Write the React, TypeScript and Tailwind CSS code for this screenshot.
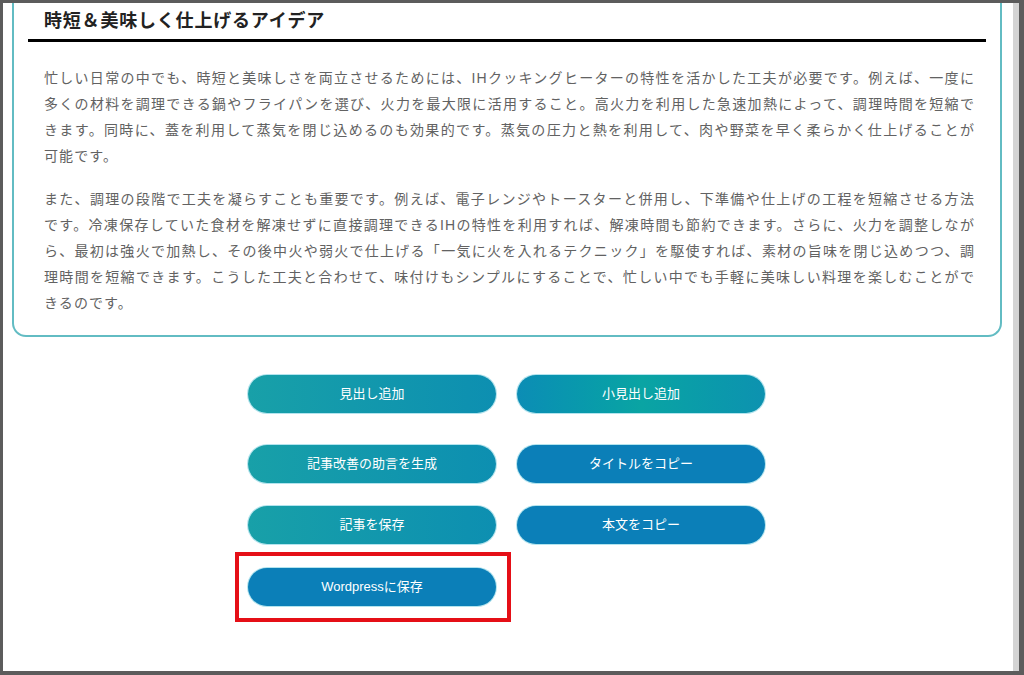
const font = { fontFamily: '"Liberation Sans", "Noto Sans CJK JP", sans-serif' };

const para1 = [
  '忙しい日常の中でも、時短と美味しさを両立させるためには、IHクッキングヒーターの特性を活かした工夫が必要です。例えば、一度に',
  '多くの材料を調理できる鍋やフライパンを選び、火力を最大限に活用すること。高火力を利用した急速加熱によって、調理時間を短縮で',
  'きます。同時に、蓋を利用して蒸気を閉じ込めるのも効果的です。蒸気の圧力と熱を利用して、肉や野菜を早く柔らかく仕上げることが',
  '可能です。',
];

const para2 = [
  'また、調理の段階で工夫を凝らすことも重要です。例えば、電子レンジやトースターと併用し、下準備や仕上げの工程を短縮させる方法',
  'です。冷凍保存していた食材を解凍せずに直接調理できるIHの特性を利用すれば、解凍時間も節約できます。さらに、火力を調整しなが',
  'ら、最初は強火で加熱し、その後中火や弱火で仕上げる「一気に火を入れるテクニック」を駆使すれば、素材の旨味を閉じ込めつつ、調',
  '理時間を短縮できます。こうした工夫と合わせて、味付けもシンプルにすることで、忙しい中でも手軽に美味しい料理を楽しむことがで',
  'きるのです。',
];

function Paragraph({ lines, className }: { lines: string[]; className?: string }) {
  return (
    <div className={`w-[931px] text-[14px] leading-[26px] tracking-[1.1px] text-[#626262] ${className ?? ''}`}>
      {lines.map((line, i) => (
        <div
          key={i}
          className={`whitespace-nowrap ${i < lines.length - 1 ? 'text-justify [text-align-last:justify]' : ''}`}
        >
          {line}
        </div>
      ))}
    </div>
  );
}

function PillButton({ label, tone }: { label: string; tone: 'teal' | 'tealMix' | 'blue' }) {
  const tones = {
    teal: 'bg-linear-to-r from-[#18a0a8] to-[#0d8fb1]',
    tealMix: 'bg-linear-to-r from-[#0c8db5] via-[#0aa4a3] to-[#0d92b0]',
    blue: 'bg-[#0b7fb8]',
  };
  return (
    <button
      className={`h-[38px] w-[248px] rounded-full text-[13px] text-white shadow-[0_0_0_1px_#b3e4ee] ${tones[tone]}`}
    >
      {label}
    </button>
  );
}

export default function App() {
  return (
    <div className="h-[675px] w-[1024px] bg-[#5c5c5c] pt-[3px] pl-[3px] pr-[5px] pb-[4px]" style={font}>
      <div className="flex h-full">
        <div className="flex-1 bg-white">
          {/* article card, top edge scrolled off */}
          <div className="ml-[9px] mr-[11px] rounded-b-[14px] border-2 border-t-0 border-[#62bcc3] pt-[5px] pb-[19px]">
            <div className="mx-[14px] border-b-[3px] border-black pb-[5px] pl-[16px]">
              <h2 className="text-[18px] font-bold leading-[26px] tracking-[0.8px] text-[#222]">
                時短＆美味しく仕上げるアイデア
              </h2>
            </div>
            <div className="pl-[30px] pt-[23px]">
              <Paragraph lines={para1} />
              <Paragraph lines={para2} className="mt-[17px]" />
            </div>
          </div>

          {/* action buttons */}
          <div className="ml-[245px] mt-[38px] flex flex-col">
            <div className="flex gap-[21px]">
              <PillButton label="見出し追加" tone="teal" />
              <PillButton label="小見出し追加" tone="tealMix" />
            </div>
            <div className="mt-[32px] flex gap-[21px]">
              <PillButton label="記事改善の助言を生成" tone="teal" />
              <PillButton label="タイトルをコピー" tone="blue" />
            </div>
            <div className="mt-[23px] flex gap-[21px]">
              <PillButton label="記事を保存" tone="teal" />
              <PillButton label="本文をコピー" tone="blue" />
            </div>
            <div className="mt-[24px] flex">
              <div className="relative">
                <PillButton label="Wordpressに保存" tone="blue" />
                <span className="pointer-events-none absolute -top-[16px] -bottom-[16px] -left-[13px] -right-[15px] border-4 border-[#e50f17]" />
              </div>
            </div>
          </div>
        </div>
        <div className="w-[6px] bg-[#d4d4d4]" />
      </div>
    </div>
  );
}
